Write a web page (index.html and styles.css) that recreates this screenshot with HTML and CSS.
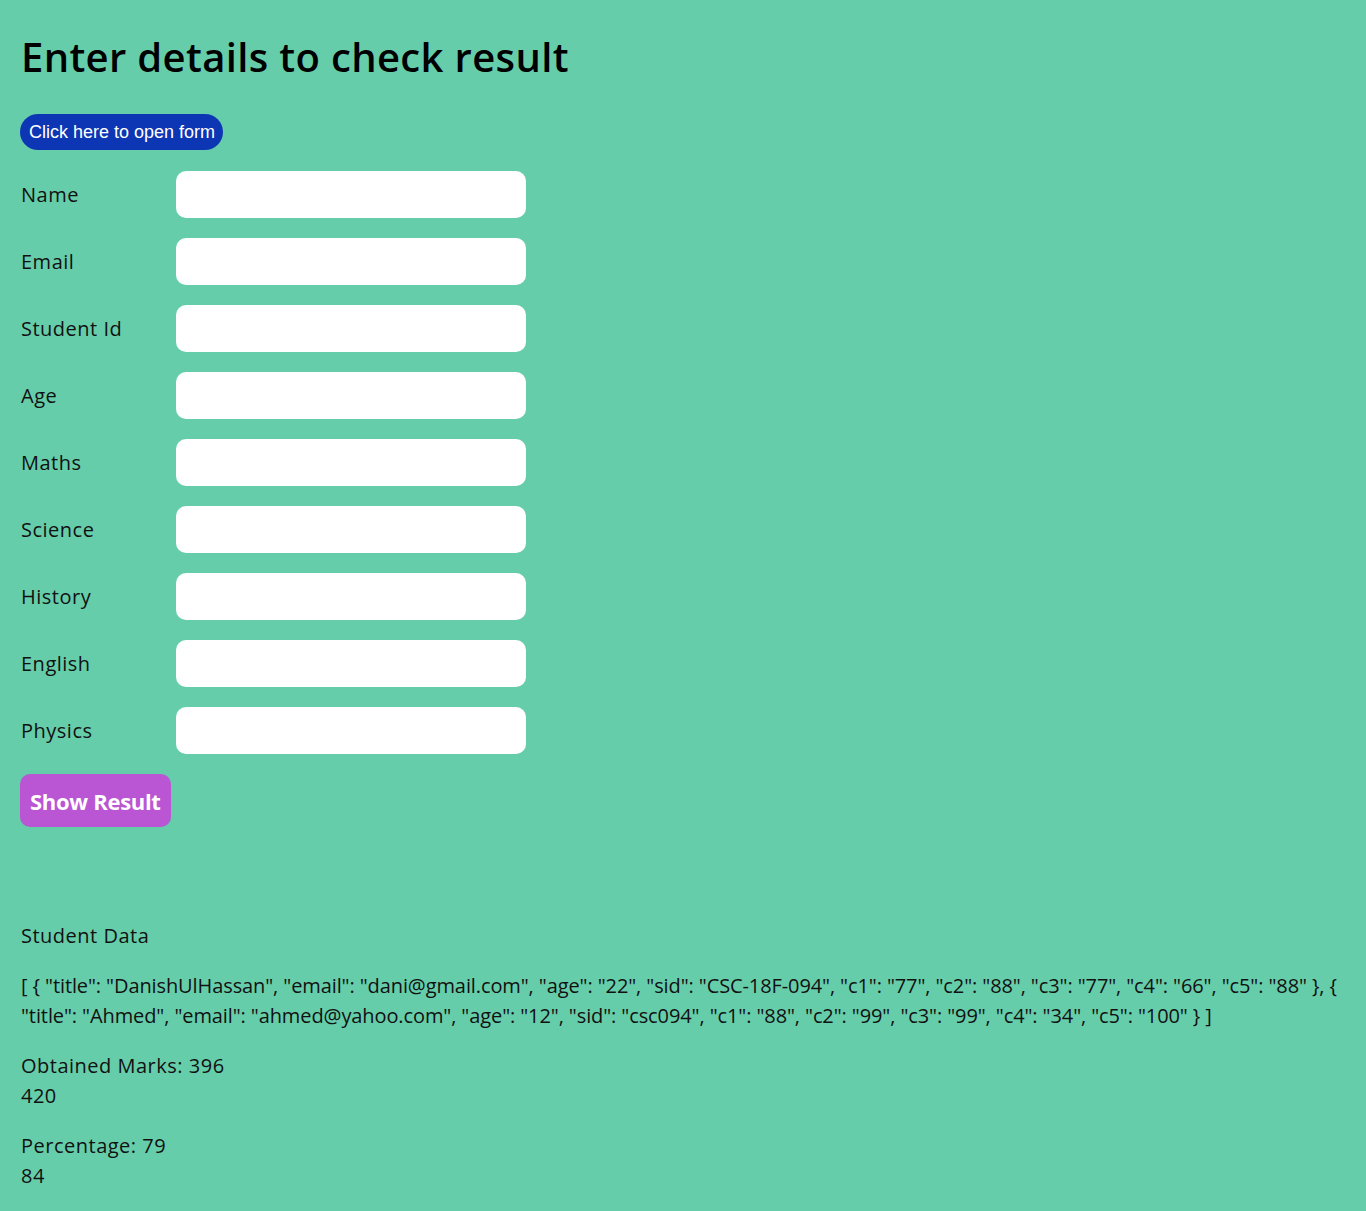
FILE: index.html
```html
<!DOCTYPE html>
<html lang="en">
<head>
<meta charset="utf-8">
<title>Check result</title>
<link rel="stylesheet" href="styles.css">
</head>
<body>
<main class="page">
  <h1 class="title">Enter details to check result</h1>
  <button class="open-btn" type="button">Click here to open form</button>
  <form class="form">
    <div class="row"><label class="label">Name</label><input class="field" type="text"></div>
    <div class="row"><label class="label">Email</label><input class="field" type="text"></div>
    <div class="row"><label class="label">Student Id</label><input class="field" type="text"></div>
    <div class="row"><label class="label">Age</label><input class="field" type="text"></div>
    <div class="row"><label class="label">Maths</label><input class="field" type="text"></div>
    <div class="row"><label class="label">Science</label><input class="field" type="text"></div>
    <div class="row"><label class="label">History</label><input class="field" type="text"></div>
    <div class="row"><label class="label">English</label><input class="field" type="text"></div>
    <div class="row"><label class="label">Physics</label><input class="field" type="text"></div>
    <button class="show-btn" type="button">Show Result</button>
  </form>
  <section class="results">
    <p class="text">Student Data</p>
    <p class="text json">[ { "title": "DanishUlHassan", "email": "dani@gmail.com", "age": "22", "sid": "CSC-18F-094", "c1": "77", "c2": "88", "c3": "77", "c4": "66", "c5": "88" }, { "title": "Ahmed", "email": "ahmed@yahoo.com", "age": "12", "sid": "csc094", "c1": "88", "c2": "99", "c3": "99", "c4": "34", "c5": "100" } ]</p>
    <p class="text">Obtained Marks: 396<br>420</p>
    <p class="text">Percentage: 79<br>84</p>
  </section>
</main>
</body>
</html>
```

FILE: styles.css
```css
html, body {
  margin: 0;
  padding: 0;
  background: #66cdaa;
}
body {
  font-family: "Open Sans", "DejaVu Sans", sans-serif;
  color: #111;
}
.page {
  padding: 27px 0 0 21px;
}
.title {
  margin: 0;
  font-size: 40px;
  font-weight: 600;
  line-height: 60px;
  color: #000;
  letter-spacing: 0.35px;
}
.open-btn {
  margin-top: 27px;
  margin-left: -1px;
  display: block;
  height: 36px;
  padding: 0 8px 0 9px;
  border: none;
  border-radius: 18px;
  background: #0d36b4;
  color: #fff;
  font-family: "Liberation Sans", Arial, sans-serif;
  font-size: 18px;
}
.form {
  margin-top: 21px;
  display: flex;
  flex-direction: column;
  gap: 20px;
  align-items: flex-start;
}
.row {
  display: flex;
  align-items: center;
}
.label {
  width: 155px;
  font-size: 20px;
  letter-spacing: 0.5px;
  color: #111;
}
.field {
  width: 350px;
  height: 47px;
  box-sizing: border-box;
  border: none;
  border-radius: 10px;
  background: #fff;
  margin: 0;
}
.show-btn {
  margin-left: -1px;
  height: 53px;
  padding: 0 10px;
  border: none;
  border-radius: 10px;
  background: #ba55d3;
  color: #fff;
  font-family: "Open Sans", sans-serif;
  font-weight: 700;
  font-size: 22px;
  letter-spacing: -0.3px;
}
.results {
  margin-top: 94px;
}
.text {
  margin: 20px 0;
  font-size: 20px;
  line-height: 30px;
  letter-spacing: 0.5px;
}
.json {
  letter-spacing: -0.1px;
}
```
